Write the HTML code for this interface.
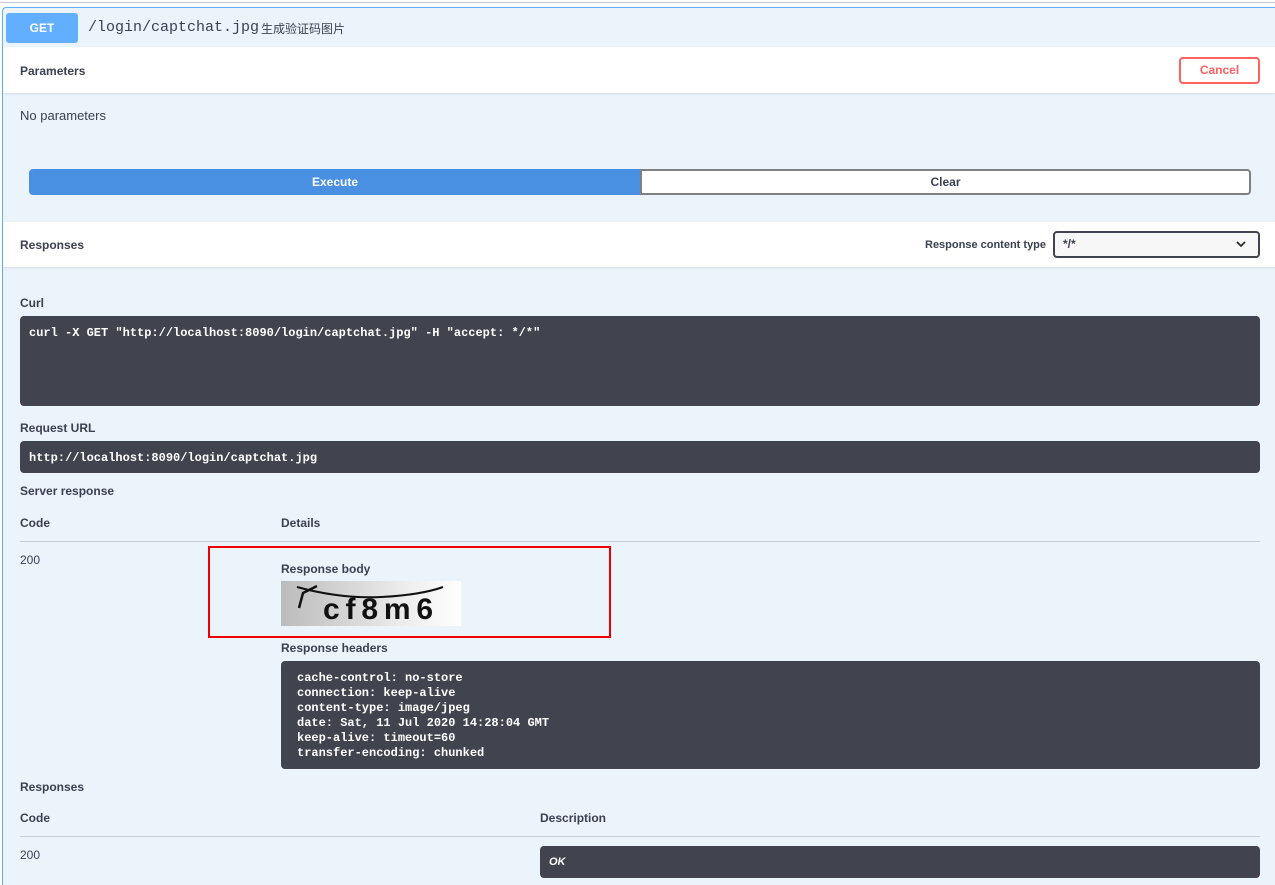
<!DOCTYPE html>
<html><head><meta charset="utf-8"><style>
*{margin:0;padding:0;box-sizing:border-box}
body{width:1275px;height:885px;background:#fff;font-family:"Liberation Sans","Noto Sans CJK SC",sans-serif;color:#3b4151;position:relative;overflow:hidden}
.a{position:absolute}
.b{font-weight:bold;font-size:12px}
.mono{font-family:"Liberation Mono","DejaVu Sans Mono",monospace}
.dark{background:#41444e;border-radius:4px;color:#fff;font-weight:bold;font-size:12px}
</style></head><body>
<div class="a" style="left:0;top:2px;width:1275px;height:1px;background:#c8c8c8"></div>
<div class="a" style="left:2px;top:7px;width:1273px;height:878px;background:#ebf3fb;border-left:1px solid #61affe;border-top:1px solid #61affe;border-radius:4px 0 0 0"></div>
<div class="a" style="left:6px;top:13px;width:72px;height:30px;background:#61affe;border-radius:3px;color:#fff;font-weight:bold;font-size:12px;text-align:center;line-height:30px">GET</div>
<div class="a mono" style="left:88px;top:19px;font-size:15px;color:#3b4151">/login/captchat.jpg</div>
<div class="a" style="left:261px;top:20px;font-size:12px">生成验证码图片</div>
<div class="a" style="left:3px;top:47px;width:1272px;height:46px;background:#fff;box-shadow:0 1px 2px rgba(0,0,0,.1)"></div>
<div class="a b" style="left:20px;top:64px">Parameters</div>
<div class="a" style="left:1179px;top:57px;width:81px;height:27px;border:2px solid #ff6060;border-radius:4px;color:#ff6060;font-weight:bold;font-size:12px;text-align:center;line-height:23px">Cancel</div>
<div class="a" style="left:20px;top:108px;font-size:13px">No parameters</div>
<div class="a" style="left:29px;top:169px;width:612px;height:26px;background:#4990e2;border-radius:4px 0 0 4px;color:#fff;font-weight:bold;font-size:12px;text-align:center;line-height:26px">Execute</div>
<div class="a" style="left:640px;top:169px;width:611px;height:26px;background:#fff;border:2px solid #808080;border-radius:0 4px 4px 0;font-weight:bold;font-size:12px;text-align:center;line-height:22px">Clear</div>
<div class="a" style="left:3px;top:222px;width:1272px;height:45px;background:#fff;box-shadow:0 1px 2px rgba(0,0,0,.1)"></div>
<div class="a b" style="left:20px;top:238px">Responses</div>
<div class="a b" style="left:925px;top:239px;font-size:11px">Response content type</div>
<div class="a" style="left:1053px;top:231px;width:207px;height:27px;border:2px solid #41444e;border-radius:4px;background:#f7f7f7;font-size:12px;font-weight:bold;padding:4px 8px">*/*<svg style="position:absolute;right:12px;top:8px" width="10" height="7"><path d="M1 1 L5 5 L9 1" stroke="#222" stroke-width="1.6" fill="none"/></svg></div>
<div class="a b" style="left:20px;top:296px">Curl</div>
<div class="a dark mono" style="left:20px;top:316px;width:1240px;height:90px;padding:10px 9px">curl -X GET "http://localhost:8090/login/captchat.jpg" -H "accept: */*"</div>
<div class="a b" style="left:20px;top:421px">Request URL</div>
<div class="a dark mono" style="left:20px;top:441px;width:1240px;height:32px;padding:10px 9px">http://localhost:8090/login/captchat.jpg</div>
<div class="a b" style="left:20px;top:484px">Server response</div>
<div class="a b" style="left:20px;top:516px">Code</div>
<div class="a b" style="left:281px;top:516px">Details</div>
<div class="a" style="left:20px;top:541px;width:1240px;height:1px;background:#c8ccd3"></div>
<div class="a" style="left:20px;top:553px;font-size:12px">200</div>
<div class="a" style="left:208px;top:546px;width:403px;height:92px;border:2px solid #e00"></div>
<div class="a b" style="left:281px;top:562px">Response body</div>
<div class="a" style="left:281px;top:581px;width:180px;height:45px;background:linear-gradient(90deg,#bbb,#eee 70%,#fff)">
<svg width="180" height="45"><path d="M16 6 Q60 18 100 16 T162 6" stroke="#111" stroke-width="2" fill="none"/><path d="M18 27 L22 12 L36 5" stroke="#111" stroke-width="2.5" fill="none"/><text x="42" y="38" font-family="Liberation Sans" font-weight="bold" font-size="30" fill="#111" textLength="110">cf8m6</text></svg></div>
<div class="a b" style="left:281px;top:641px">Response headers</div>
<div class="a dark mono" style="left:281px;top:661px;width:979px;height:108px;padding:10px 16px;line-height:15px;font-size:12px">cache-control: no-store<br>connection: keep-alive<br>content-type: image/jpeg<br>date: Sat, 11 Jul 2020 14:28:04 GMT<br>keep-alive: timeout=60<br>transfer-encoding: chunked</div>
<div class="a b" style="left:20px;top:780px">Responses</div>
<div class="a b" style="left:20px;top:811px">Code</div>
<div class="a b" style="left:540px;top:811px">Description</div>
<div class="a" style="left:20px;top:836px;width:1240px;height:1px;background:#c8ccd3"></div>
<div class="a" style="left:20px;top:848px;font-size:12px">200</div>
<div class="a dark" style="left:540px;top:846px;width:720px;height:32px;padding:10px 9px;font-style:italic;font-size:11px">OK</div>
</body></html>
